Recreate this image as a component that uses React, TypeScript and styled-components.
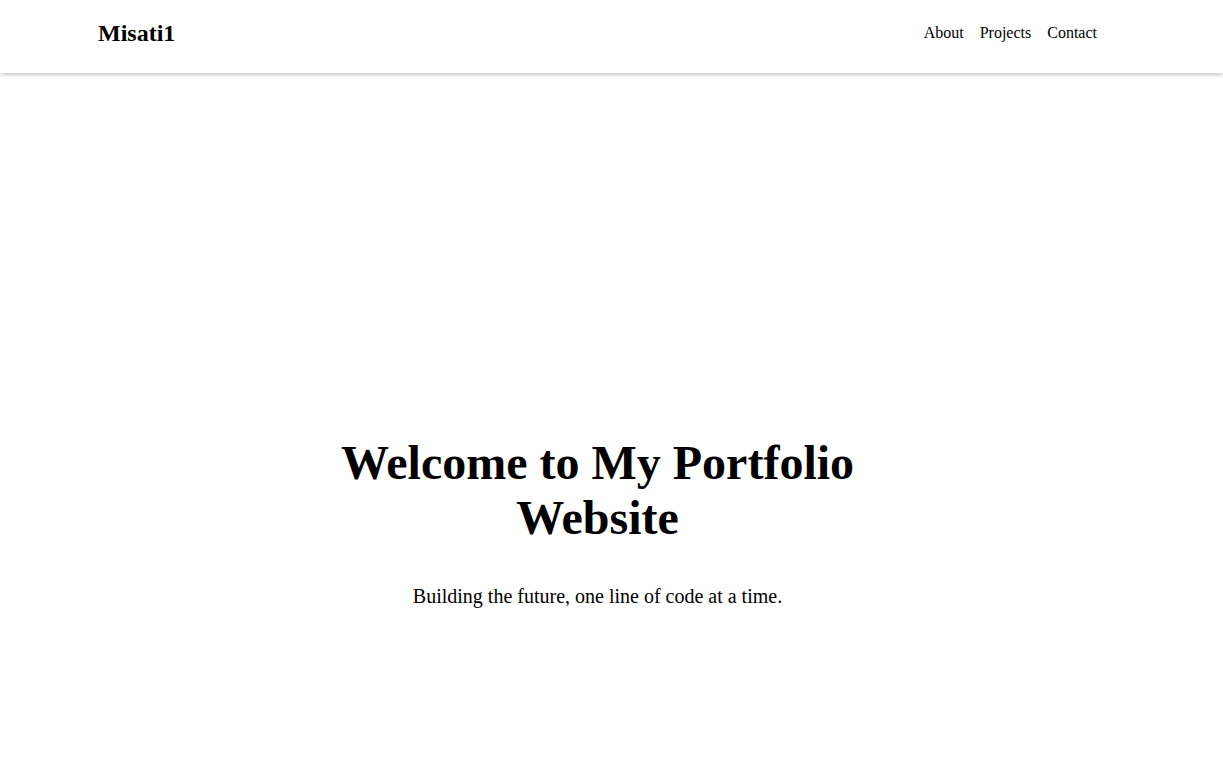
import React from "react";
import styled, { createGlobalStyle } from "styled-components";

const GlobalStyle = createGlobalStyle`
  html, body { margin: 0; padding: 0; background: #fff; }
  body { font-family: "Liberation Serif", "Times New Roman", serif; color: #000; }
`;

const Header = styled.header`
  height: 73px;
  box-shadow: 0 2px 4px rgba(0, 0, 0, 0.22);
  background: #fff;
`;

const HeaderInner = styled.div`
  height: 66px;
  box-sizing: border-box;
  padding: 0 126px 0 98px;
  display: flex;
  align-items: center;
  justify-content: space-between;
`;

const Logo = styled.div`
  font-size: 24px;
  font-weight: bold;
`;

const Nav = styled.nav`
  display: flex;
  gap: 16px;
`;

const NavLink = styled.a`
  font-size: 16px;
  color: #000;
  text-decoration: none;
`;

const Hero = styled.main`
  padding: 362px 0 0 0;
  display: flex;
  flex-direction: column;
  align-items: center;
  text-align: center;
  margin-right: 28px;
`;

const Title = styled.h1`
  font-size: 48px;
  font-weight: bold;
  max-width: 600px;
  margin: 0 0 40px;
  line-height: 1.15;
`;

const Subtitle = styled.p`
  font-size: 20px;
  margin: 0;
`;

export default function App() {
  return (
    <>
      <GlobalStyle />
      <Header>
        <HeaderInner>
          <Logo>Misati1</Logo>
          <Nav>
            <NavLink href="#about">About</NavLink>
            <NavLink href="#projects">Projects</NavLink>
            <NavLink href="#contact">Contact</NavLink>
          </Nav>
        </HeaderInner>
      </Header>
      <Hero>
        <Title>Welcome to My Portfolio Website</Title>
        <Subtitle>Building the future, one line of code at a time.</Subtitle>
      </Hero>
    </>
  );
}
